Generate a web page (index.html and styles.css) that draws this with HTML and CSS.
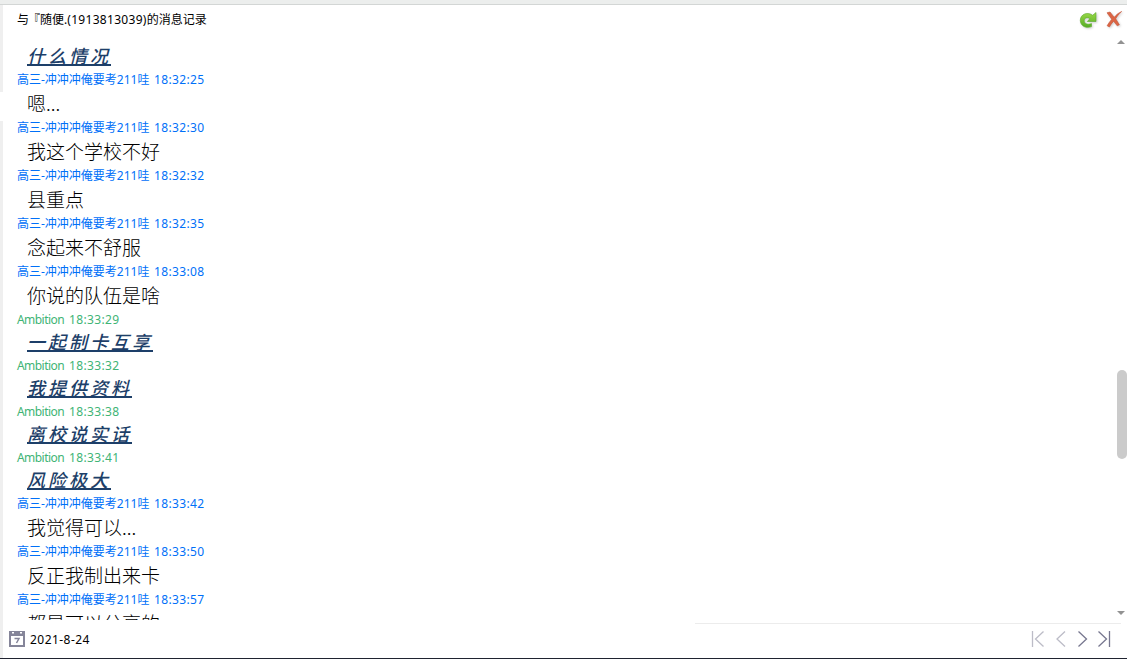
FILE: index.html
```html
<!DOCTYPE html>
<html lang="zh-CN">
<head>
	<meta charset="UTF-8">
	<title>消息记录</title>
	<link rel="stylesheet" href="styles.css">
</head>
<body>
	<div id="box">
		<div id="topline"></div>
		<div id="header">
			<div id="title">与<span class="quote">『</span>随便.<span class="num">(1913813039)</span>的消息记录</div>
			<div id="tools">
				<svg class="tool" width="20" height="20" viewBox="0 0 20 20">
					<defs>
						<linearGradient id="green" x1="0" y1="0" x2="0" y2="1">
							<stop offset="0" stop-color="#9ad848"/>
							<stop offset="1" stop-color="#56ad25"/>
						</linearGradient>
					</defs>
					<path d="M13.500 17.600C7.500 20 2.300 16.500 2.300 11.300 2.300 5 9.800 2.500 14.600 6.300L18 3.500v9H9.200l2.600-2.700C9.800 7.700 6.200 8.700 6.200 11.700c0 2.900 3.400 4.400 7.300 2.900z" fill="url(#green)" stroke="#5aa92c" stroke-width=".6"/>
				</svg>
				<svg class="tool" width="20" height="20" viewBox="0 0 20 20">
					<path d="M3 3.800L6 3l4.200 5.300C12 6 14.300 4 17.700 2.500 15 5 13 7.300 11.700 9.800l3.700 6-2.200 1-3.600-4.600c-1.800 2-3.200 3.800-4.200 5.800l-2.300-1.300C4.300 14.500 6 12.500 7.700 10.200z" fill="#dc6544" stroke="#c2553a" stroke-width=".6"/>
				</svg>
			</div>
		</div>
		<div id="main">
			<div id="list">
				<div class="msg own"><span>什么情况</span></div>
				<div class="meta"><span class="name">高三-冲冲冲俺要考211哇</span><span class="time">18:32:25</span></div>
				<div class="msg">嗯...</div>
				<div class="meta"><span class="name">高三-冲冲冲俺要考211哇</span><span class="time">18:32:30</span></div>
				<div class="msg">我这个学校不好</div>
				<div class="meta"><span class="name">高三-冲冲冲俺要考211哇</span><span class="time">18:32:32</span></div>
				<div class="msg">县重点</div>
				<div class="meta"><span class="name">高三-冲冲冲俺要考211哇</span><span class="time">18:32:35</span></div>
				<div class="msg">念起来不舒服</div>
				<div class="meta"><span class="name">高三-冲冲冲俺要考211哇</span><span class="time">18:33:08</span></div>
				<div class="msg">你说的队伍是啥</div>
				<div class="meta me"><span class="name">Ambition</span><span class="time">18:33:29</span></div>
				<div class="msg own"><span>一起制卡互享</span></div>
				<div class="meta me"><span class="name">Ambition</span><span class="time">18:33:32</span></div>
				<div class="msg own"><span>我提供资料</span></div>
				<div class="meta me"><span class="name">Ambition</span><span class="time">18:33:38</span></div>
				<div class="msg own"><span>离校说实话</span></div>
				<div class="meta me"><span class="name">Ambition</span><span class="time">18:33:41</span></div>
				<div class="msg own"><span>风险极大</span></div>
				<div class="meta"><span class="name">高三-冲冲冲俺要考211哇</span><span class="time">18:33:42</span></div>
				<div class="msg">我觉得可以...</div>
				<div class="meta"><span class="name">高三-冲冲冲俺要考211哇</span><span class="time">18:33:50</span></div>
				<div class="msg">反正我制出来卡</div>
				<div class="meta"><span class="name">高三-冲冲冲俺要考211哇</span><span class="time">18:33:57</span></div>
				<div class="msg">都是可以分享的</div>
			</div>
			<div id="scroll">
				<span class="arrow up"></span>
				<span class="thumb"></span>
				<span class="arrow down"></span>
			</div>
		</div>
		<div id="footer">
			<svg width="16" height="16" viewBox="0 0 16 16">
				<path d="M0 0h16v16H0zM2 5v9h12V5z" fill="#858599" fill-rule="evenodd"/>
				<path d="M3 1h2v1.500H3zM11 1h2v1.500h-2z" fill="#fff"/>
				<path d="M5.500 7.500H10L7.500 12" fill="none" stroke="#858599" stroke-width="1.500"/>
			</svg>
			<span id="date">2021-8-24</span>
			<div id="pager">
				<svg class="off" width="14" height="18" viewBox="0 0 14 18"><path d="M1.500 1v16M12.500 1.500L4.500 9l8 7.500"/></svg>
				<svg class="off" width="14" height="18" viewBox="0 0 14 18"><path d="M12 1.500L4 9l8 7.500"/></svg>
				<svg width="14" height="18" viewBox="0 0 14 18"><path d="M3.500 1.500l8 7.500-8 7.500"/></svg>
				<svg width="14" height="18" viewBox="0 0 14 18"><path d="M1.500 1.500l8 7.500-8 7.500M12.500 1v16"/></svg>
			</div>
		</div>
		<div id="bottom"></div>
		<!-- 左侧边条 -->
		<span class="edge edge1"></span>
		<span class="edge edge2"></span>
	</div>
</body>
</html>
```
FILE: styles.css
```css
*{
	margin: 0;
	padding: 0;
	box-sizing: border-box;
}
body{
	font-family: "Noto Sans", "Noto Sans CJK SC", sans-serif;
	font-size: 12px;
	color: #000;
	background: #fff;
}
#box{
	width: 1127px;
	height: 659px;
	position: relative;
	overflow: hidden;
	display: flex;
	flex-direction: column;
}
#topline{
	height: 5px;
	flex: none;
	background: #eceeed;
	border-bottom: 1px solid #d3d6d5;
}
#header{
	height: 30px;
	flex: none;
	display: flex;
	justify-content: space-between;
	padding: 0 3px 0 17px;
}
#title{
	line-height: 30px;
	white-space: nowrap;
}
.quote{
	margin-left: -1px;
}
.num{
	letter-spacing: 0.3px;
}
#tools{
	display: flex;
	gap: 6px;
	padding-top: 4px;
}
.tool{
	filter: drop-shadow(1px 1px 1px rgba(0,0,0,0.2));
}
#main{
	height: 585px;
	flex: none;
	display: flex;
	justify-content: space-between;
	overflow: hidden;
}
#list{
	padding: 9px 0 0 17px;
}
.meta{
	height: 20px;
	line-height: 20px;
	color: #0070f8;
	white-space: nowrap;
	display: flex;
	gap: 5px;
}
.meta .name{
	width: 132px;
}
.meta .time{
	letter-spacing: 0.35px;
}
.me{
	color: #40b475;
}
.me .name{
	width: 47px;
	letter-spacing: -0.55px;
}
.msg{
	height: 28px;
	line-height: 26px;
	padding-left: 10px;
	font-family: "Noto Sans CJK SC", sans-serif;
	font-size: 19px;
	font-weight: 300;
	white-space: nowrap;
}
.own{
	height: 26px;
	line-height: 26px;
	font-size: 18px;
	font-weight: 500;
	font-style: italic;
	letter-spacing: 3px;
	color: #1d3f69;
}
.own span{
	display: inline-block;
	height: 22px;
	line-height: 22px;
	vertical-align: top;
	border-bottom: 2px solid #1d3f69;
}
#scroll{
	width: 10px;
	display: flex;
	flex-direction: column;
	align-items: center;
	justify-content: space-between;
	padding: 5px 0 5px;
}
.thumb{
	width: 10px;
	height: 89px;
	margin-top: 174px;
	border-radius: 5px;
	background: #cbcbcb;
}
.arrow{
	border: 4px solid transparent;
	margin-right: 2px;
}
.up{
	border-top: 0;
	border-bottom-color: #929292;
}
.down{
	border-bottom: 0;
	border-top-color: #929292;
}
#footer{
	height: 38px;
	flex: none;
	display: flex;
	align-items: center;
	padding: 0 16px 0 9px;
	background: linear-gradient(#ececec, #ececec) 695px 3px / 426px 1px no-repeat;
}
#date{
	margin-left: 5px;
	letter-spacing: 0.45px;
}
#pager{
	margin-left: auto;
	display: flex;
	gap: 8px;
}
#pager path{
	fill: none;
	stroke: #77778f;
	stroke-width: 1.3;
}
#pager .off path{
	stroke: #bcbcc7;
}
#bottom{
	height: 1px;
	background: #1f2330;
}
.edge{
	position: absolute;
	left: 0;
	width: 3px;
	background: #efefef;
}
.edge1{
	top: 5px;
	height: 87px;
}
.edge2{
	top: 121px;
	bottom: 1px;
}
```
